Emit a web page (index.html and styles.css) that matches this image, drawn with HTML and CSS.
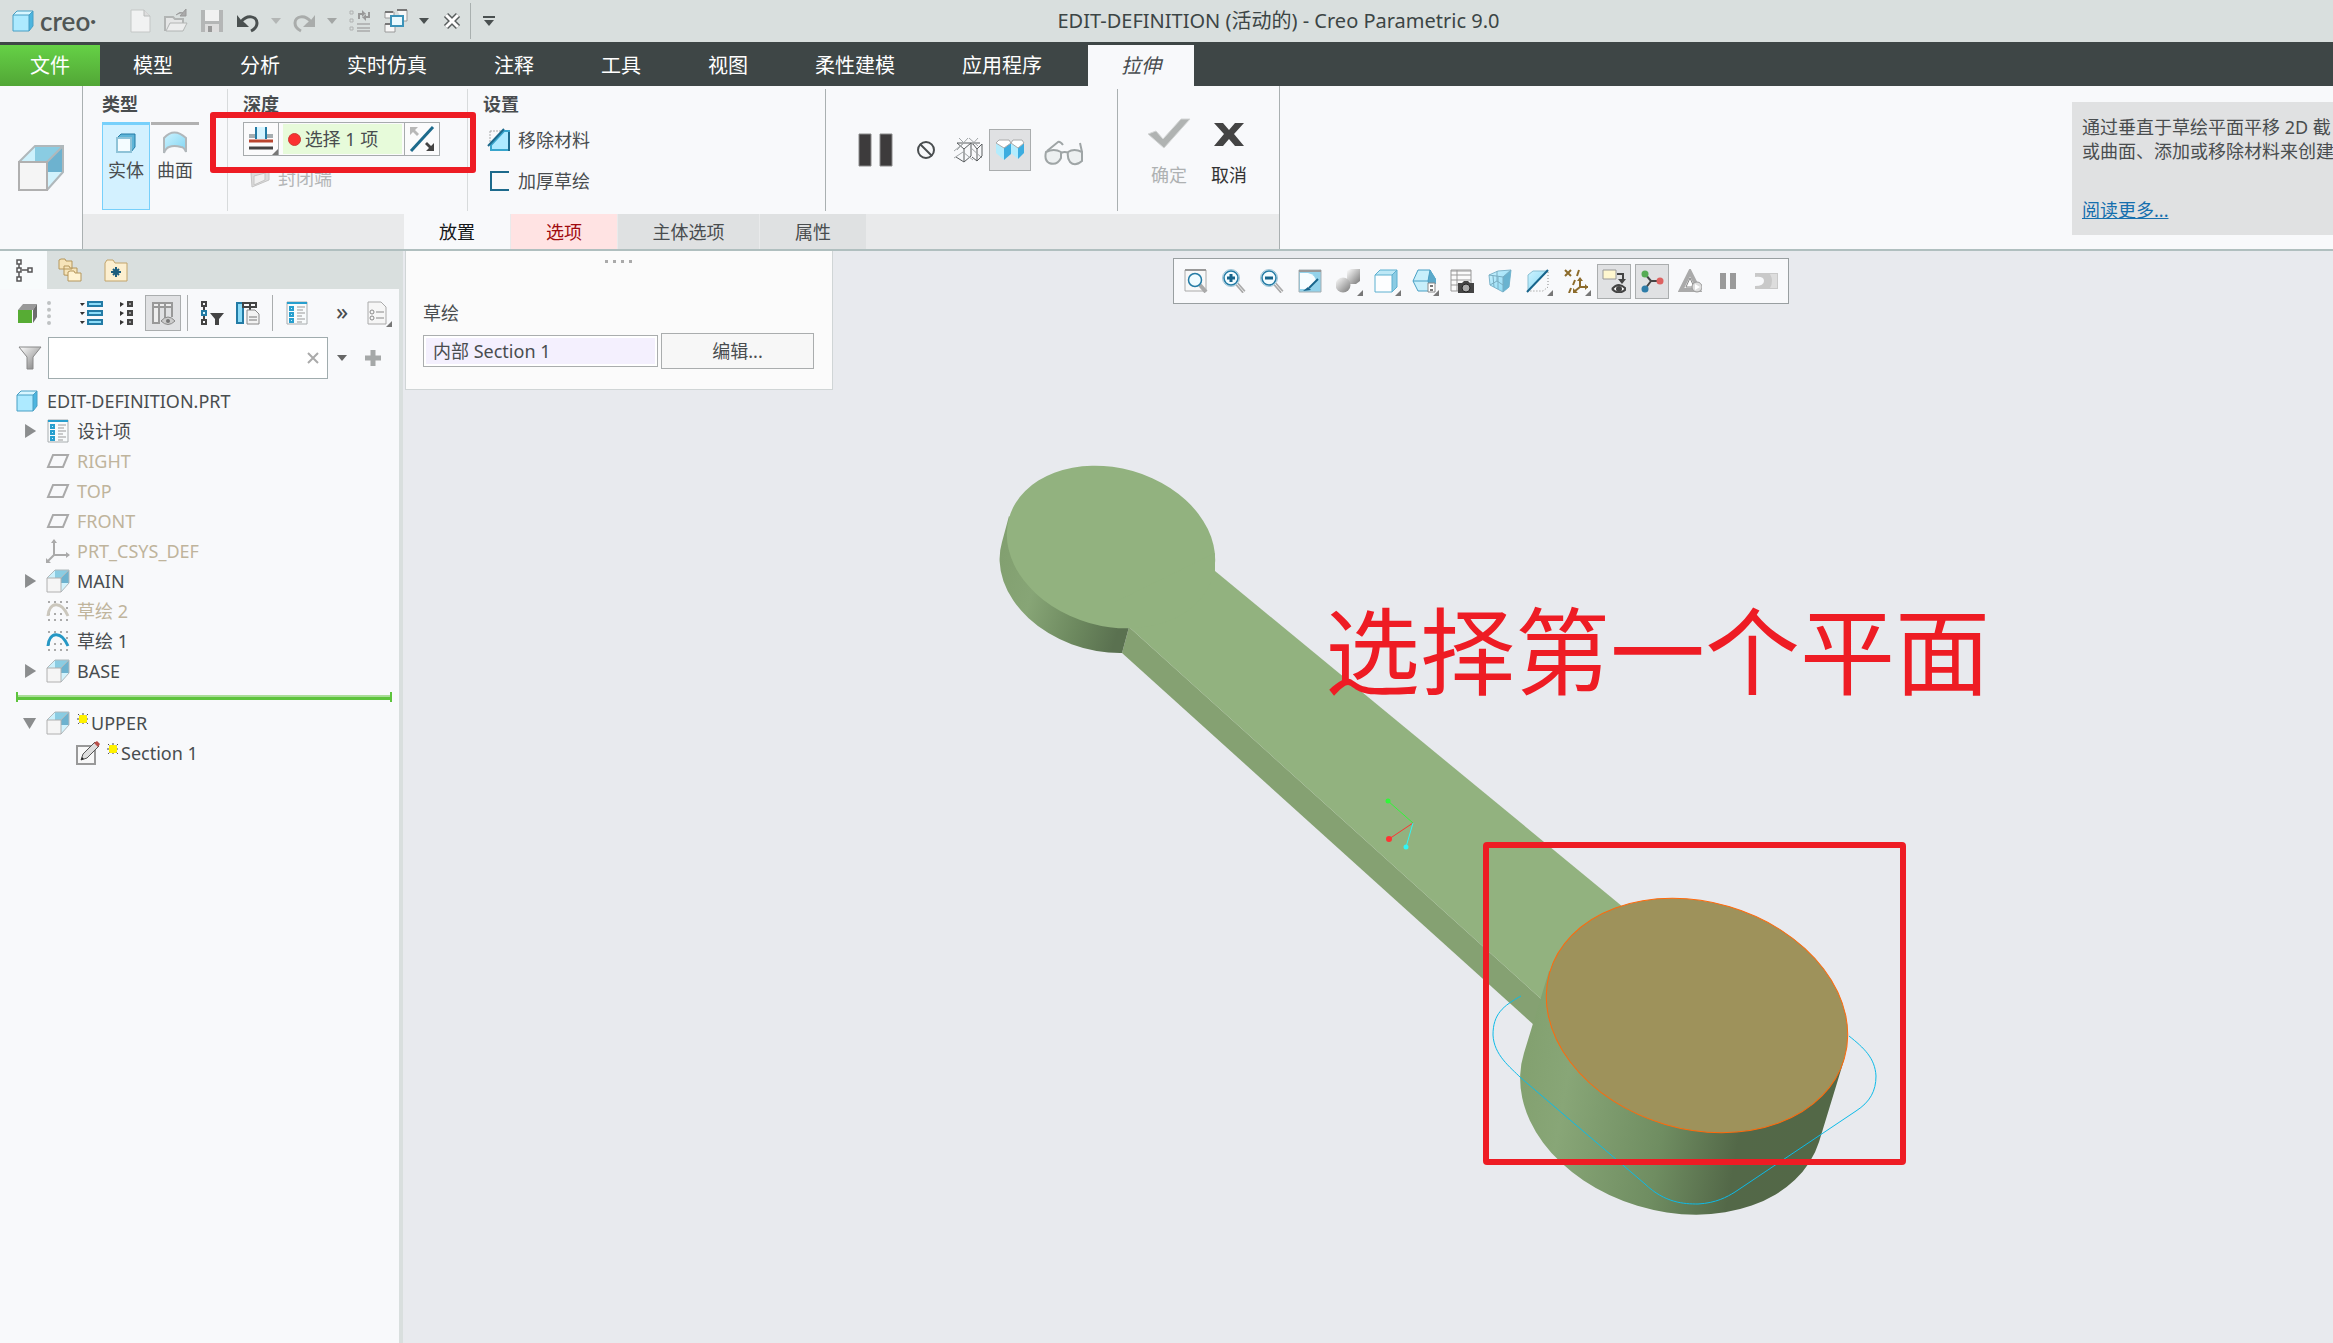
FILE: index.html
```html
<!DOCTYPE html>
<html lang="zh-CN">
<head>
<meta charset="utf-8">
<meta name="viewport" content="width=device-width, initial-scale=1">
<title>EDIT-DEFINITION (活动的) - Creo Parametric 9.0</title>
<link rel="stylesheet" href="styles.css">
</head>
<body>
<svg class="defs" aria-hidden="true">
  <defs>
    <linearGradient id="blue" x1="0" y1="0" x2="1" y2="1"><stop offset="0" stop-color="#cdf3ff"/><stop offset="1" stop-color="#7fd4f2"/></linearGradient>
    <linearGradient id="deep" x1="0" y1="0" x2="1" y2="1"><stop offset="0" stop-color="#b9e4f3"/><stop offset="1" stop-color="#4ba3c9"/></linearGradient>
    <linearGradient id="steel" x1="0" y1="0" x2="1" y2="1"><stop offset="0" stop-color="#fff"/><stop offset="1" stop-color="#777"/></linearGradient>
    <linearGradient id="side" gradientUnits="userSpaceOnUse" x1="1526" y1="1060" x2="1815" y2="1110"><stop offset="0" stop-color="#83a170"/><stop offset=".15" stop-color="#88a677"/><stop offset=".5" stop-color="#6f8d61"/><stop offset=".76" stop-color="#536848"/><stop offset="1" stop-color="#536847"/></linearGradient>
    <linearGradient id="side2" gradientUnits="userSpaceOnUse" x1="1000" y1="560" x2="1128" y2="600"><stop offset="0" stop-color="#82a070"/><stop offset=".3" stop-color="#87a576"/><stop offset=".7" stop-color="#6c885e"/><stop offset="1" stop-color="#5a7150"/></linearGradient>
  </defs>
  <symbol id="cube" viewBox="0 0 24 24"><path d="M2 6 6 2h16v15l-4 5H2z" fill="#4db5df"/><path d="M2 6h16v16H2z" fill="#adeaff"/><path d="M2 6 6 2h16l-4 4z" fill="#d8f6ff"/><path d="M2 6 6 2h16v15l-4 5H2zM2 6h16l4-4M18 6v16" fill="none" stroke="#489fc4"/></symbol>
  <symbol id="extrude" viewBox="0 0 24 24"><path d="M1 9 9 1v8z" fill="#cdf1fc"/><path d="M9 1h14L15 9H9z" fill="#8accE2"/><path d="M23 1v13h-8V9z" fill="#6db2cf"/><path d="M15 14h8l-8 9z" fill="#d2f2fc"/><path d="M1 9 9 1h14v13l-8 9M15 9l8-8" fill="none" stroke="#b0b8bb"/><path d="M1 9h14v14H1z" fill="#f5f5f5" stroke="#b0b0b0"/></symbol>
  <symbol id="sketch" viewBox="0 0 24 24"><path d="M2 2h2v2H2zM8 2h2v2H8zM14 2h2v2h-2zM20 2h2v2h-2zM2 14h2v2H2zM8 14h2v2H8zM14 14h2v2h-2zM2 20h2v2H2zM8 20h2v2H8zM14 20h2v2h-2zM20 20h2v2h-2zM20 8h2v2h-2z" fill="#aaa"/><path d="M2 17C3 3 15 1 22 17" fill="none" stroke="currentColor" stroke-width="3"/></symbol>
  <symbol id="plane" viewBox="0 0 24 24"><path d="M7 6h15l-5 12H2z" fill="none" stroke="#aaa" stroke-width="2"/></symbol>
  <symbol id="design" viewBox="0 0 24 24"><path d="M2 1h20v22H2z" fill="#f8fbfc" stroke="#a8adaf"/><path d="M2 1h20v2H2z" fill="#279fce"/><path d="M5 6h3v3H5zM5 12h3v3H5zM5 18h3v3H5z" fill="#c9efff" stroke="#279fce" stroke-width="2"/><path d="M12 6h8M12 9h6M12 12h8M12 15h5M12 18h8M12 21h5" stroke="#999"/></symbol>
  <symbol id="new" viewBox="0 0 24 24"><path d="M3 1h13l6 6v16H3z" fill="#f1f2f2" stroke="#c4c7c6"/><path d="M16 1v6h6" fill="#ddd" stroke="#b9bcbb"/></symbol>
  <symbol id="corner" viewBox="0 0 24 24"><path d="M24 14v10H14z" fill="#777"/><path d="M24 0v24H0z" fill="#777"/></symbol>
  <symbol id="lens" viewBox="0 0 24 24"><path d="m15 15 7 8" stroke="#aaa" stroke-width="4"/><path d="m15 15 7 8" stroke="#eee" stroke-width="1"/><circle cx="9" cy="9" r="8.500" fill="#f3fcff" stroke="#9fc4d6"/><circle cx="9" cy="9" r="7" fill="#f3fcff" stroke="#237ba5" stroke-width="1.500"/></symbol>
  <symbol id="star" viewBox="0 0 12 12"><path d="M1 1l10 10M11 1 1 11M6 0v12M0 6h12" stroke="#444" stroke-dasharray="2 1"/><path d="M2 3h8v6H2zM3 2h6v8H3z" fill="#fff200"/></symbol>
</svg>

<header class="titlebar">
  <div class="brand"><svg class="i24"><use href="#cube"/></svg><span>creo<sup>•</sup></span></div>
  <nav class="quick" aria-label="快速访问">
    <button class="q" aria-label="新建"><svg class="i24"><use href="#new"/></svg></button>
    <button class="q" aria-label="打开"><svg class="i24" viewBox="0 0 24 24"><path d="M1 22V8h8l2 2h8v4" fill="#e5e6e6" stroke="#b2b5b4" stroke-width="2"/><path d="m2 22 4-8h17l-4 8z" fill="#eceded" stroke="#b2b5b4"/><path d="M12 6q4-4 7-2m3-4v7h-6z" fill="#aaa" stroke="#999"/></svg></button>
    <button class="q" aria-label="保存"><svg class="i24" viewBox="0 0 24 24"><path d="M1 1h22v22H1z" fill="#b4b6b6"/><path d="M5 1h14v11H5z" fill="#f1f1f1"/><path d="M5 15h14v8H5z" fill="#ddd"/><path d="M8 17h4v6H8z" fill="#999"/></svg></button>
    <button class="q" aria-label="撤消"><svg class="i24" viewBox="0 0 24 24"><path d="M5 13C11 5 21 7 21 14q0 5-6 8" fill="none" stroke="#4a5050" stroke-width="3"/><path d="M1 6v12h12l-4-4-4-3z" fill="#4a5050"/></svg></button>
    <button class="dd" aria-label="撤消列表"><svg class="i12" viewBox="0 0 12 12"><path d="M1 3h10L6 9z" fill="#b3b6b5"/></svg></button>
    <button class="q" aria-label="重做"><svg class="i24" viewBox="0 0 24 24"><path d="M19 13C13 5 3 7 3 14q0 5 6 8" fill="none" stroke="#a9acab" stroke-width="3"/><path d="M23 6v12H11l4-4 4-3z" fill="#a9acab"/></svg></button>
    <button class="dd" aria-label="重做列表"><svg class="i12" viewBox="0 0 12 12"><path d="M1 3h10L6 9z" fill="#a3a6a5"/></svg></button>
    <button class="q" aria-label="重新生成"><svg class="i24" viewBox="0 0 24 24"><path d="M2 2h3v3H2zM2 10h3v3H2zM2 18h3v3H2z" fill="none" stroke="#b0b2b2"/><path d="M9 15h13M9 19h13M9 22h13" stroke="#b5b7b7" stroke-width="2"/><path d="M11 10V5h5M21 3v5h-5" stroke="#999" stroke-width="2" fill="none"/><path d="m14 1 4 4-4 4zM18 4l-4 4 4 4z" fill="#999"/></svg></button>
    <button class="q" aria-label="窗口"><svg class="i24" viewBox="0 0 24 24"><path d="M1 3h9v6H1zM13 1h10v11h-4M1 15h10v8H1z" fill="#f7f7f7" stroke="#999"/><path d="M1 3h8M13 1h10M1 15h7" stroke="#777" stroke-width="2"/><path d="M7 7h12v10H7z" fill="#eafaff" stroke="#3c93b9" stroke-width="2"/></svg></button>
    <button class="dd" aria-label="窗口列表"><svg class="i12" viewBox="0 0 12 12"><path d="M1 3h10L6 9z" fill="#4a5050"/></svg></button>
    <button class="q" aria-label="关闭"><svg class="i20" viewBox="0 0 20 20"><path d="m4 4 12 12M16 4 4 16" stroke="#5a5f5f" stroke-width="6"/><path d="m4 4 12 12M16 4 4 16" stroke="#fff" stroke-width="3"/></svg></button>
    <button class="q more" aria-label="自定义"><svg class="i16" viewBox="0 0 16 16"><path d="M2 4h12" stroke="#4a5050" stroke-width="2"/><path d="M3 7h10l-5 6z" fill="#4a5050"/></svg></button>
  </nav>
  <h1>EDIT-DEFINITION (活动的) - Creo Parametric 9.0</h1>
</header>

<nav class="tabs" aria-label="功能区">
  <button class="tab file">文件</button><button class="tab">模型</button><button class="tab">分析</button><button class="tab">实时仿真</button><button class="tab">注释</button><button class="tab">工具</button><button class="tab">视图</button><button class="tab">柔性建模</button><button class="tab">应用程序</button><button class="tab active">拉伸</button>
</nav>

<section class="ribbon">
  <div class="feature"><svg class="i48"><use href="#extrude"/></svg></div>
  <div class="dash">
    <div class="groups">
      <section class="group type">
        <h2>类型</h2>
        <div class="row">
          <button class="kind on"><svg class="i24" viewBox="0 0 24 24"><path d="M3 7 7 3h14v13l-4 5H3z" fill="#5fb5d8" stroke="#237ba5"/><path d="M3 7h14v14H3z" fill="#f4fcff" stroke="#8fc3d8" stroke-width="2"/></svg>实体</button>
          <button class="kind"><svg class="i24" viewBox="0 0 24 24"><path d="M1 7q10-11 22 0v14q-2-5-5-5-7-2-12 0-3 1-5 6z" fill="url(#blue)" stroke="#b1b7ba" stroke-width="2"/></svg>曲面</button>
        </div>
      </section>
      <section class="group depth">
        <h2>深度</h2>
        <div class="combo">
          <button class="mode" aria-label="深度选项"><svg class="i28" viewBox="0 0 28 28"><path d="M2 9h24v4H2z" fill="#a5adb0"/><path d="M9 2h10v12H9z" fill="#d5f4ff"/><path d="M9 2v12M19 2v12" stroke="#237ba5" stroke-width="2"/><path d="M2 16h24" stroke="#b9452f" stroke-width="3"/><path d="M2 23h24" stroke="#444" stroke-width="3"/></svg><svg class="fly"><use href="#corner"/></svg></button>
          <label class="pick"><span class="dot"></span><input aria-label="深度参考" value="选择 1 项"></label>
          <button class="flip" aria-label="反向"><svg class="i28" viewBox="0 0 28 28"><path d="M25 2 3 26" stroke="#1d6a8c" stroke-width="3"/><path d="M2 2h8L7 5l4 4-2 2-4-4-3 3z" fill="#b8b8b8"/><path d="M26 26h-8l3-3-4-4 2-2 4 4 3-3z" fill="#444"/></svg></button>
        </div>
        <label class="capped"><svg class="i20" viewBox="0 0 20 20"><path d="m1 5 5-3 13-1v11L2 19z" fill="#dcdcdc" stroke="#c4c4c4"/><path d="m4 8 11-3v7L4 17z" fill="#f0f0f0" stroke="#c4c4c4"/></svg>封闭端</label>
        <div class="mark" aria-hidden="true"></div>
      </section>
      <section class="group settings">
        <h2>设置</h2>
        <button class="opt"><svg class="i24" viewBox="0 0 24 24"><path d="M3 3h12M3 3v12" stroke="#aaa" stroke-dasharray="2 1"/><path d="M4 17 17 3h5v19H4z" fill="#aeeaff" stroke="#38a5cc" stroke-width="2"/><path d="M1 18 17 1M22 4v19" stroke="#1d6a8c" stroke-width="2"/></svg>移除材料</button>
        <button class="opt"><svg class="i24" viewBox="0 0 24 24"><path d="M22 3H4v18h18" stroke="#1d6a8c" fill="none" stroke-width="2"/></svg>加厚草绘</button>
      </section>
      <section class="group preview">
        <button class="pv" aria-label="暂停"><svg class="i36" viewBox="0 0 36 36"><path d="M2 2h12v32H2zM23 2h12v32H23z" fill="#3d3b3c" stroke="#8a8a8a"/></svg></button>
        <button class="pv narrow" aria-label="无预览"><svg class="i20" viewBox="0 0 20 20"><circle cx="10" cy="10" r="8" fill="none" stroke="#4a4e50" stroke-width="2"/><path d="m4 4 12 12" stroke="#4a4e50" stroke-width="2"/></svg></button>
        <button class="pv" aria-label="分离"><svg class="i32" viewBox="0 0 32 32"><path d="M5 9 12 15v13l-8-5M12 15l7-6v13l-7 6M21 10l4 5v12l-5-4M25 15l5-5v12l-5 5M5 9h23" fill="none" stroke="#5a5e60"/><path d="m7 4 5 5-10 8M16 4 5 16m12-12 9 8M26 4l-8 9 12 11M2 24l9-6 10 8" fill="none" stroke="#a2a6a8"/></svg></button>
        <button class="pv on" aria-label="连接"><svg class="i32" viewBox="0 0 32 32"><path d="M2 9v10l8 7V14z" fill="#b4ecfd"/><path d="m10 14 7-5v11l-7 6z" fill="#3dade0"/><path d="M17 9v10l7 6V14z" fill="#b4ecfd"/><path d="m24 14 6-5v10l-6 6z" fill="#3dade0"/><path d="m2 9 3-3h10l2 3-7 5zm15 0 2-3h9l2 3-6 5z" fill="#fff" stroke="#aaa"/></svg></button>
        <button class="pv" aria-label="几何预览"><svg class="i40" viewBox="0 0 40 40"><path d="M2 22q8-4 15 0v6q-4 8-12 5-5-3-3-11zM24 22q6-4 14 0v9q-7 6-12 1-3-4-2-10zM17 23q4-2 7 0" fill="#edf0f1" stroke="#9fa5a6" stroke-width="2"/><path d="m3 21 11-9q2-1 5 3M38 22l-2-9" fill="none" stroke="#9fa5a6" stroke-width="2"/></svg></button>
      </section>
      <section class="group finish">
        <button class="done" disabled><svg class="i44" viewBox="0 0 44 36"><path d="m1 19 8-3 7 8L34 4h9L17 33z" fill="#b0b3b2" stroke="#d4d6d6"/></svg>确定</button>
        <button class="done"><svg class="i44" viewBox="0 0 44 36"><path d="M7 8h9l6 7 6-7h9L27 19l10 12h-9l-6-7-6 7H7l10-12z" fill="#444"/></svg>取消</button>
      </section>
    </div>
    <div class="panels">
      <button class="ptab cur">放置</button><button class="ptab err">选项</button><button class="ptab wide">主体选项</button><button class="ptab">属性</button>
    </div>
  </div>
  <aside class="help">
    <p>通过垂直于草绘平面平移 2D 截<br>或曲面、添加或移除材料来创建</p>
    <a href="#more">阅读更多...</a>
  </aside>
</section>

<main class="work">
  <aside class="side">
    <div class="stabs">
      <button class="stab on" aria-label="模型树"><svg class="i24" viewBox="0 0 24 24"><path d="M5 2h4v4H5zM5 10h4v4H5zM5 19h4v4H5zM16 10h4v4h-4zM7 6v4M7 14v5M10 12h6" fill="none" stroke="#555" stroke-width="1.500"/></svg></button>
      <button class="stab" aria-label="文件夹浏览器"><svg class="i24" viewBox="0 0 24 24"><path d="M1 11V2l2-1h4l1 2h6v8zM6 17V8h5l1 2h7v8z" fill="#f6e4b9" stroke="#b5975d"/><path d="M10 23v-9l2-1h4l1 2h6v8z" fill="#fff3d2" stroke="#b5975d"/></svg></button>
      <button class="stab" aria-label="收藏夹"><svg class="i24" viewBox="0 0 24 24"><path d="M1 23V5l2-3h6l2 3h12v18z" fill="#fcefd0" stroke="#c2a46b"/><path d="M12 9v10M7 14h10M9 11l6 6M15 11l-6 6" stroke="#1c5d7d" stroke-width="2"/></svg></button>
    </div>
    <div class="stools">
      <button class="tb" aria-label="模型"><svg class="i24" viewBox="0 0 24 24"><path d="M3 9 8 3h14l-4 6z" fill="#999"/><path d="m18 9 4-6v13l-4 6z" fill="#6d6d6d"/><path d="M3 9h14v13H3z" fill="#57ac34"/></svg></button>
      <span class="grip"></span>
      <button class="tb" aria-label="展开"><svg class="i24" viewBox="0 0 24 24"><path d="M1 2h5L3 5zM1 11h5l-3 3zM1 20h5l-3 3z" fill="#333"/><path d="M9 1h14v4H9zM9 10h14v4H9zM9 19h14v4H9z" fill="#8ddcf8" stroke="#237ba5" stroke-width="2"/></svg></button>
      <button class="tb" aria-label="折叠"><svg class="i24" viewBox="0 0 24 24"><path d="M5 1v5l4-3zM5 10v5l4-3zM5 19v5l4-3z" fill="#333"/><path d="M13 1h4v4h-4zM13 10h4v4h-4zM13 19h4v4h-4z" fill="#999" stroke="#444" stroke-width="2"/></svg></button>
      <button class="tb on" aria-label="列显示"><svg class="i24" viewBox="0 0 24 24"><path d="M2 2h19v4H2zM2 6h6v16H2zM14 2v15M21 6v10M8 2v4" fill="#eee" stroke="#999" stroke-width="2"/><path d="M10 20q7-8 14 0-7 7-14 0" fill="#ccc" stroke="#888"/><circle cx="17" cy="20" r="2" fill="#777"/></svg></button>
      <span class="bar"></span>
      <button class="tb" aria-label="树过滤器"><svg class="i24" viewBox="0 0 24 24"><path d="M2 1h4v4H2zM2 19h4v4H2zM4 5v5M4 14v5" fill="none" stroke="#444" stroke-width="2"/><path d="M2 10h4v4H2z" fill="#d8f7ff" stroke="#237ba5" stroke-width="2"/><path d="M10 12h14l-5 6v6h-4v-6z" fill="#444"/></svg></button>
      <button class="tb" aria-label="树列"><svg class="i24" viewBox="0 0 24 24"><path d="M1 2h6v20H1z" fill="#8ddcf8" stroke="#237ba5" stroke-width="2"/><path d="M7 2h13v4H7zM14 2v8" fill="none" stroke="#444" stroke-width="2"/><path d="M11 9h8l4 4v10H11z" fill="#f3f3f3" stroke="#888"/><path d="M13 16h8M13 19h8" stroke="#777"/></svg></button>
      <span class="bar"></span>
      <button class="tb" aria-label="设计项"><svg class="i24"><use href="#design"/></svg></button>
      <button class="tb chev" aria-label="更多">»</button>
      <button class="tb last" aria-label="设置"><svg class="i24" viewBox="0 0 24 24"><path d="M2 1h13l5 5v17H2z" fill="#f6f6f6" stroke="#aaa"/><circle cx="6" cy="11" r="2" fill="none" stroke="#888"/><circle cx="6" cy="17" r="2" fill="none" stroke="#888"/><path d="M10 11h8M10 17h8" stroke="#888"/></svg><svg class="fly"><use href="#corner"/></svg></button>
    </div>
    <div class="search">
      <svg class="i24" viewBox="0 0 24 24"><path d="M1 1h22l-8 10v12H9V11z" fill="url(#steel)" stroke="#888"/></svg>
      <div class="field"><input aria-label="搜索"><button aria-label="清除"><svg class="i12" viewBox="0 0 12 12"><path d="m1 1 10 10M11 1 1 11" stroke="#aaa" stroke-width="2"/></svg></button></div>
      <button class="dd" aria-label="选项"><svg class="i12" viewBox="0 0 12 12"><path d="M1 3h10L6 9z" fill="#666"/></svg></button>
      <button class="add" aria-label="添加"><svg class="i20" viewBox="0 0 20 20"><path d="M10 2v16M2 10h16" stroke="#a5a8a8" stroke-width="5"/></svg></button>
    </div>
    <ul class="tree">
      <li class="root"><svg class="i24"><use href="#cube"/></svg>EDIT-DEFINITION.PRT</li>
      <li><i class="tw shut"></i><svg class="i24"><use href="#design"/></svg>设计项</li>
      <li class="dim"><i class="tw"></i><svg class="i24"><use href="#plane"/></svg>RIGHT</li>
      <li class="dim"><i class="tw"></i><svg class="i24"><use href="#plane"/></svg>TOP</li>
      <li class="dim"><i class="tw"></i><svg class="i24"><use href="#plane"/></svg>FRONT</li>
      <li class="dim"><i class="tw"></i><svg class="i24" viewBox="0 0 24 24"><path d="M8 1v15h15M8 16l-6 6" fill="none" stroke="#aaa" stroke-width="2"/><path d="m5 4 3-4 3 4zM20 13l4 3-4 3zM0 19v5h5z" fill="#aaa"/></svg>PRT_CSYS_DEF</li>
      <li><i class="tw shut"></i><svg class="i24"><use href="#extrude"/></svg>MAIN</li>
      <li class="dim"><i class="tw"></i><svg class="i24"><use href="#sketch"/></svg>草绘 2</li>
      <li><i class="tw"></i><svg class="i24 blue"><use href="#sketch"/></svg>草绘 1</li>
      <li><i class="tw shut"></i><svg class="i24"><use href="#extrude"/></svg>BASE</li>
      <li class="insert" aria-label="在此插入"></li>
      <li><i class="tw open"></i><svg class="i24"><use href="#extrude"/></svg><svg class="i12"><use href="#star"/></svg>UPPER</li>
      <li class="deep"><svg class="i24" viewBox="0 0 24 24"><path d="M1 5h18v18H1z" fill="#f8f8f8" stroke="#999" stroke-width="2"/><path d="m5 19 2-6L19 1l4 4L11 17z" fill="#ddd" stroke="#555"/><path d="m18 2 3-2 3 3-2 3z" fill="#b94f4a"/><path d="m5 19 1-3 2 2z" fill="#222"/></svg><svg class="i12"><use href="#star"/></svg>Section 1</li>
    </ul>
  </aside>

  <section class="view">
    <svg class="scene" viewBox="403 251 1930 1092" preserveAspectRatio="xMinYMin slice" role="img" aria-label="模型">
      <path d="M1129 627 1560 1016 1545 1035 1122 653z" fill="#85a172"/>
      <path d="M1009 516 1002 542A106 79 16 0 0 1122 653L1129 627z" fill="url(#side2)"/>
      <path d="M1215 571 1640 921 1560 1016 1129 627z" fill="#92b27f"/>
      <ellipse cx="1111" cy="547" rx="106" ry="79" transform="rotate(16 1111 547)" fill="#92b27f"/>
      <path d="M1215 553v19l-40 30-60 0z" fill="#92b27f"/>
      <path d="M1549 971 1524 1053A154 113.500 16 0 0 1819 1142L1844 1060z" fill="url(#side)"/>
      <ellipse cx="1697" cy="1015.500" rx="153.500" ry="113.500" transform="rotate(16.300 1697 1015.500)" fill="#9e925b" stroke="#ff6a0c"/>
      <path d="M1521 996C1503 1006 1493 1014 1493 1035 1494 1055 1510 1067 1521 1078L1645 1184C1665 1203 1684 1204 1698 1204 1716 1203 1727 1197 1735 1192L1856 1111C1870 1102 1876 1091 1876 1076 1875 1058 1864 1048 1849 1036" fill="none" stroke="#0dbbe8"/>
      <path d="m1413 823-25-22" stroke="#30f838"/><path d="m1413 823-24 16" stroke="#f33"/><path d="m1413 823-7 24" stroke="#30f6f6"/>
      <circle cx="1388" cy="801" r="2.500" fill="#30f838"/><circle cx="1389" cy="839" r="3" fill="#f33"/><circle cx="1406" cy="847" r="2.500" fill="#30f6f6"/>
      <rect x="1486" y="845" width="417" height="317" rx="1" fill="none" stroke="#ee1c24" stroke-width="6"/>
      <text class="note" x="1325" y="688">选择第一个平面</text>
    </svg>
    <form class="placement">
      <div class="dots"><i></i><i></i><i></i><i></i></div>
      <label for="sk">草绘</label>
      <div class="row"><input id="sk" value="内部 Section 1"><button type="button">编辑...</button></div>
    </form>
    <div class="gfx" role="toolbar" aria-label="图形工具栏">
      <button aria-label="重新调整"><svg class="i24" viewBox="0 0 24 24"><path d="M1 1h21v21H1z" fill="#f8f8f8" stroke="#aaa"/><path d="M1 1h21" stroke="#999" stroke-width="2"/><path d="m16 16 6 7" stroke="#aaa" stroke-width="4"/><circle cx="11" cy="11" r="6.500" fill="#effbff" stroke="#237ba5" stroke-width="1.500"/></svg></button>
      <button aria-label="放大"><svg class="i24"><use href="#lens"/></svg><svg class="i24 over" viewBox="0 0 24 24"><path d="M9 5v8M5 9h8" stroke="#17648b" stroke-width="3"/></svg></button>
      <button aria-label="缩小"><svg class="i24"><use href="#lens"/></svg><svg class="i24 over" viewBox="0 0 24 24"><path d="M5 9h8" stroke="#17648b" stroke-width="3"/></svg></button>
      <button aria-label="重画"><svg class="i24" viewBox="0 0 24 24"><path d="M1 1h22v22H1z" fill="#93d2ea" stroke="#a4aeb2"/><path d="M1 2h22" stroke="#999" stroke-width="2"/><path d="M2 4h8q8 2 8 9l-7 7H2z" fill="#f7fdff"/><path d="m20 10-9 9" stroke="#17648b" stroke-width="2"/><path d="m5 22 5-4 3 3z" fill="#17648b"/></svg></button>
      <button aria-label="渲染"><svg class="i24" viewBox="0 0 24 24"><path d="m11 2 4-2h9v12l-4 3h-9z" fill="url(#steel)"/><circle cx="7" cy="16" r="7.500" fill="url(#steel)"/></svg><svg class="fly"><use href="#corner"/></svg></button>
      <button aria-label="显示样式"><svg class="i24" viewBox="0 0 24 24"><path d="M1 6 6 1h17v17l-5 5H1z" fill="#8bcbe3"/><path d="M1 6 6 1h17l-5 5z" fill="#bde8f6"/><path d="M1 6h17v17H1z" fill="#fdfeff"/><path d="M1 6 6 1h17v17l-5 5H1zM1 6h17l5-5M18 6v17" fill="none" stroke="#5db0d0"/></svg><svg class="fly"><use href="#corner"/></svg></button>
      <button aria-label="已保存方向"><svg class="i24" viewBox="0 0 24 24"><path d="M6 1h12l6 10-6 11H6L1 12z" fill="#c7effb" stroke="#489fc4"/><path d="m18 1 6 9v5h-8v-4z" fill="#5aa9ca"/><path d="M1 12h15l2-11M16 12l2 9" fill="none" stroke="#489fc4"/><path d="M16 14h7v9h-7z" fill="#fff" stroke="#888"/><path d="M18 16h3v2h-3zM18 20h3v2h-3z" fill="#777"/></svg><svg class="fly"><use href="#corner"/></svg></button>
      <button aria-label="视图管理器"><svg class="i24" viewBox="0 0 24 24"><path d="M1 1h20v21H1z" fill="#fafafa" stroke="#999"/><path d="M1 2h20M1 6h20M1 11h20M1 16h10M7 1v21" stroke="#999"/><path d="M8 14h4l2-2h4l2 2h4v10H8z" fill="#444"/><circle cx="16" cy="19" r="4" fill="#aaa" stroke="#222"/></svg></button>
      <button aria-label="透视图"><svg class="i24" viewBox="0 0 24 24"><path d="m1 6 9-4 13-1-2 17-6 5-13-7z" fill="url(#blue)" stroke="#7fb6cc"/><path d="m15 8 8-7-2 17-6 5z" fill="#69b3d0"/><path d="m1 6 14 2 8-7M15 8v15M2 16l7-4 6 4M9 12V2M5 7l1 11M10 8v12" fill="none" stroke="#79adc2"/></svg></button>
      <button aria-label="截面"><svg class="i24" viewBox="0 0 24 24"><path d="m2 6 5-4h15L2 22z" fill="url(#blue)" stroke="#8abfd3"/><path d="M22 3v15l-5 4H2" fill="none" stroke="#888" stroke-dasharray="1 2"/><path d="M1 23 22 1" stroke="#17648b" stroke-width="2"/></svg><svg class="fly"><use href="#corner"/></svg></button>
      <button aria-label="基准显示"><svg class="i24" viewBox="0 0 24 24"><path d="m1 1 6 6M7 1 1 7M15 1l-2 6M11 11l-2 5M7 19l-2 5M16 10v8h8M16 18l-5 4" fill="none" stroke="#8c6b2b" stroke-width="2"/><path d="m13 12 3-4 3 4zM21 15l3 3-3 3zM9 19v5h5z" fill="#8c6b2b"/></svg><svg class="fly"><use href="#corner"/></svg></button>
      <button class="on" aria-label="注释显示"><svg class="i24" viewBox="0 0 24 24"><path d="M1 1h13v9H1z" fill="#fff7cf" stroke="#999"/><path d="M15 5h6v7" fill="none" stroke="#444" stroke-width="2"/><path d="M16 10h8l-4 5z" fill="#444"/><path d="M10 20q7-8 14 0-7 7-14 0" fill="#fff" stroke="#444" stroke-width="2"/><circle cx="17" cy="20" r="3" fill="#444"/></svg></button>
      <button class="on" aria-label="旋转中心"><svg class="i24" viewBox="0 0 24 24"><path d="m5 5 6 7 8 0M11 12l-6 8" fill="none" stroke="#444" stroke-width="2"/><circle cx="5" cy="5" r="3.500" fill="#57ac55"/><circle cx="20" cy="12" r="3.500" fill="#dd6160"/><circle cx="5" cy="20" r="3.500" fill="#2d7ca8"/></svg></button>
      <button aria-label="仿真"><svg class="i24" viewBox="0 0 24 24"><path d="M12 3 3 21h18z" fill="#eee" stroke="#aaa" stroke-width="4"/><path d="m12 9-4 9h8z" fill="#fff" stroke="#888"/><circle cx="19" cy="18" r="5" fill="#ddd" stroke="#999"/><path d="m17 15 5 3-5 3z" fill="#fff"/></svg></button>
      <button aria-label="暂停仿真"><svg class="i24" viewBox="0 0 24 24"><path d="M4 4h6v16H4zM14 4h6v16h-6z" fill="#9a9a9a"/></svg></button>
      <button aria-label="结果"><svg class="i24" viewBox="0 0 24 24"><path d="M1 4h23v16H1v-3q9 0 9-5T1 8z" fill="#c9c9c9"/><path d="M16 5h7v14h-7q4-7 0-14" fill="#ddd"/></svg></button>
    </div>
  </section>
</main>
</body>
</html>
```
FILE: styles.css
```css
* { box-sizing: border-box; }

body {
  margin: 0;
  min-height: 100vh;
  display: flex;
  flex-direction: column;
  overflow: hidden;
  background: #f8f9fb;
  color: #494d4f;
  font: 18px/24px "Noto Sans", "Noto Sans CJK SC", sans-serif;
}

button, input {
  margin: 0;
  padding: 0;
  border: 0;
  background: none;
  color: inherit;
  font: inherit;
}

h1, h2, p, ul { margin: 0; padding: 0; font: inherit; }
svg { display: block; flex: none; }
.defs { position: absolute; width: 0; height: 0; }
.row { display: flex; }

.i12 { width: 12px; height: 12px; }
.i16 { width: 16px; height: 16px; }
.i20 { width: 20px; height: 20px; }
.i24 { width: 24px; height: 24px; }
.i28 { width: 28px; height: 28px; }
.i32 { width: 32px; height: 32px; }
.i36 { width: 36px; height: 36px; }
.i40 { width: 40px; height: 40px; }
.i44 { width: 44px; height: 36px; }
.i48 { width: 48px; height: 48px; }
.fly { position: absolute; right: 0; bottom: 0; width: 6px; height: 6px; }
.blue { color: #2698c5; }

/* Title bar */
.titlebar {
  position: relative;
  display: flex;
  align-items: center;
  height: 42px;
  background: #d9dfde;
}
.brand {
  display: flex;
  align-items: center;
  gap: 5px;
  width: 122px;
  padding-left: 11px;
  color: #505655;
  font: 600 26px/32px "Lato", sans-serif;
}
.brand sup { font-size: 10px; line-height: 0; vertical-align: 6px; }
.quick { display: flex; align-items: center; height: 36px; }
.q, .dd { display: flex; align-items: center; justify-content: center; width: 36px; height: 36px; }
.dd { width: 20px; }
.more { border-left: 1px solid #a9b0af; }
.titlebar h1 {
  position: absolute;
  left: 0;
  right: 0;
  top: 7px;
  padding: 0 228px 0 452px;
  text-align: center;
  color: #3c4545;
  font-size: 20px;
  line-height: 28px;
  pointer-events: none;
}

/* Ribbon tabs */
.tabs {
  display: flex;
  gap: 1px;
  height: 44px;
  padding-top: 3px;
  background: #3e4646;
}
.tab { padding: 0 33px; color: #fff; font-size: 20px; white-space: nowrap; }
.file { padding: 0 30px; background: linear-gradient(#65d146, #52a636); }
.tab.file + .tab { margin-left: -1px; }
.tab.active { margin-left: 12px; background: #f8f9fb; color: #494d4f; font-style: italic; }

/* Ribbon */
.ribbon {
  display: flex;
  height: 165px;
  border-bottom: 2px solid #b0bfbf;
  background: #f8f9fb;
}
.feature { flex: none; width: 82px; padding: 58px 0 0 17px; }
.dash {
  display: flex;
  flex: none;
  flex-direction: column;
  justify-content: space-between;
  width: 1198px;
  border: solid #aab0b1;
  border-width: 0 1px;
}
.groups { display: flex; height: 125px; padding-top: 3px; }
.group { height: 122px; padding-top: 4px; }
.group h2 { height: 29px; font-weight: 700; line-height: 22px; }
.type { width: 144px; padding-left: 19px; }
.kind {
  display: flex;
  flex-direction: column;
  align-items: center;
  gap: 3px;
  width: 48px;
  height: 88px;
  margin-right: 1px;
  padding-top: 6px;
  border-top: 3px solid #b1b1b1;
}
.kind.on { border: 1px solid #77d0fb; border-top-width: 3px; background: #d3f1ff; }
.depth { position: relative; width: 240px; padding-left: 15px; border-left: 1px solid #d8dbdc; }
.combo {
  display: flex;
  width: 197px;
  height: 34px;
  border: 1px solid #a7abad;
  background: #fbfbfc;
}
.mode { position: relative; display: flex; align-items: center; justify-content: center; width: 35px; border-right: 1px solid #a7abad; }
.flip { display: flex; align-items: center; justify-content: center; width: 35px; border-left: 1px solid #a7abad; }
.pick { display: flex; align-items: center; gap: 4px; width: 121px; margin: 1px 2px 1px 4px; padding-left: 5px; background: #e7fbda; }
.pick input { width: 90px; }
.dot { width: 13px; height: 13px; border: 1px solid #cd3c35; border-radius: 50%; background: #fb3030; }
.capped { display: flex; align-items: center; gap: 8px; height: 24px; margin: 10px 0 0 7px; color: #b3b5b6; }
.mark {
  position: absolute;
  left: -18px;
  top: 23px;
  width: 266px;
  height: 61px;
  border: 6px solid #ee1c24;
  border-radius: 3px;
}
.settings { width: 358px; padding-left: 15px; border-left: 1px solid #d8dbdc; }
.opt { display: flex; align-items: center; gap: 7px; height: 36px; margin: 0 0 5px 4px; }
.preview {
  display: flex;
  align-items: center;
  width: 292px;
  padding: 0 0 0 28px;
  border-left: 1px solid #aab0b1;
}
.pv { display: flex; align-items: center; justify-content: center; width: 42px; height: 42px; margin-right: 12px; }
.pv.narrow { width: 36px; margin-right: 3px; }
.preview .pv:nth-child(3) { margin-right: 0; }
.pv.on { border: 1px solid #aaadae; background: #e0e1e3; }
.finish { display: flex; padding: 26px 0 0 21px; border-left: 1px solid #aab0b1; }
.done { display: flex; flex-direction: column; align-items: center; gap: 12px; width: 60px; color: #333; }
.finish .done { height: 76px; }
.done:disabled { color: #aeb1b2; }
.panels { display: flex; gap: 1px; height: 35px; padding-left: 321px; background: #e9eaeb; }
.ptab { width: 106px; background: #dfe1e2; }
.ptab.cur { background: #f8f9fb; color: #151819; }
.ptab.err { background: #ffe3e3; color: #a00b10; }
.ptab.wide { width: 141px; }
.help {
  width: 261px;
  height: 133px;
  margin: 16px 0 0 auto;
  padding: 13px 0 0 10px;
  overflow: hidden;
  background: #e0e1e2;
  white-space: nowrap;
}
.help p { height: 83px; }
.help a { color: #166fae; }

/* Model tree */
.work { display: flex; flex: 1; }
.side { flex: none; width: 403px; border-right: 4px solid #d9dfde; background: #f8f9fb; }
.stabs { display: flex; height: 38px; background: #d9dfde; }
.stab { display: flex; align-items: center; justify-content: center; width: 46px; }
.stab.on { width: 47px; background: #f8fbfc; }
.stools { display: flex; align-items: center; height: 48px; padding-left: 9px; }
.tb { position: relative; display: flex; align-items: center; justify-content: center; width: 36px; height: 36px; }
.tb.on { border: 1px solid #aaadae; background: #e0e1e3; }
.grip { width: 4px; height: 24px; margin: 0 22px 0 2px; border-left: 4px dotted #bfc2c3; }
.bar { width: 1px; height: 36px; margin: 0 6px; background: #aaadae; }
.chev { margin-left: 9px; padding-bottom: 4px; font-size: 24px; }
.tb .fly { right: 4px; bottom: 4px; }
.search { display: flex; align-items: center; height: 42px; padding-left: 18px; }
.field { display: flex; align-items: center; width: 280px; height: 42px; margin-left: 6px; border: 1px solid #a0acae; background: #fff; }
.field input { flex: 1; min-width: 0; height: 38px; padding-left: 8px; }
.field button { display: flex; padding: 8px; }
.search .dd { margin: 0 4px; }
.add { margin-left: 7px; }
.tree { padding-top: 7px; list-style: none; }
.tree li { display: flex; align-items: center; gap: 7px; height: 30px; padding-left: 23px; }
.tree .root { padding-left: 15px; gap: 8px; }
.tree .deep { padding-left: 76px; }
.tree .i12 { margin: 0 -5px 8px 0; }
.dim { color: #bfb49c; }
.dim svg { color: #cbc7bd; }
.tw { width: 16px; height: 16px; }
.shut { background: #8b8d8e; clip-path: polygon(13% 6%, 82% 50%, 13% 94%); }
.open { background: #8b8d8e; clip-path: polygon(0 18%, 82% 18%, 41% 88%); }
.tree .insert { height: 22px; padding: 0; margin: 0 7px 0 16px; }
.insert::before {
  content: "";
  width: 100%;
  height: 10px;
  border: solid #5ec43d;
  border-width: 0 2px;
  background: linear-gradient(transparent 3px, #a9dd98 3px, #a9dd98 5px, #5ec43d 5px, #5ec43d 8px, transparent 8px);
}

/* Graphics area */
.view { position: relative; flex: 1; min-width: 0; overflow: hidden; background: #e8eaee; }
.scene { position: absolute; width: 100%; height: 100%; }
.note { fill: #ee1c24; font-size: 95px; }
.placement {
  position: absolute;
  left: 2px;
  top: 0;
  width: 428px;
  height: 139px;
  padding: 9px 18px 0 17px;
  border: 1px solid #d0d5d6;
  border-top: 0;
  background: #fbfbfb;
}
.dots { display: flex; justify-content: center; gap: 5px; height: 41px; }
.dots i { width: 3px; height: 3px; background: #aaa; }
.placement label { display: block; height: 32px; }
.placement .row { align-items: center; gap: 3px; }
.placement input { width: 235px; height: 32px; padding: 0 0 2px 9px; border: 1px solid #aaadae; background: #f4f0fe; box-shadow: inset 0 0 0 2px #fff; }
.placement button { width: 153px; height: 36px; border: 1px solid #aaadae; background: #f7f7f7; }
.gfx {
  position: absolute;
  left: 770px;
  top: 7px;
  display: flex;
  align-items: center;
  gap: 4px;
  height: 46px;
  padding: 0 5px;
  border: 1px solid #999fa1;
  background: #f8f9fb;
}
.gfx button { position: relative; display: flex; align-items: center; justify-content: center; width: 34px; height: 35px; }
.gfx .on { border: 1px solid #aaadae; background: #e0e1e3; }
.gfx .over { position: absolute; }
.gfx .fly { right: 2px; bottom: 3px; }
```
